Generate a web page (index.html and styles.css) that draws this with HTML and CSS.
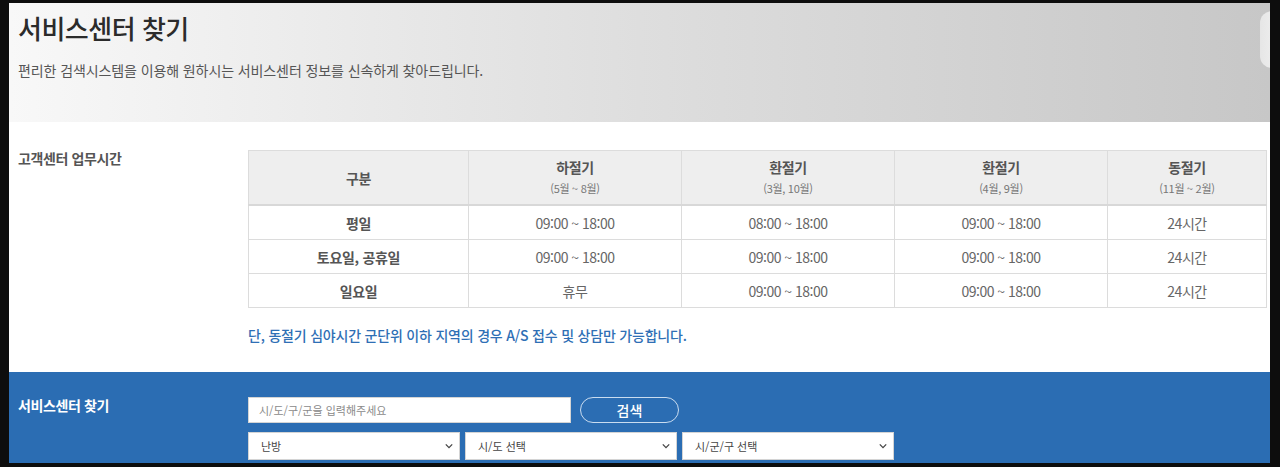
FILE: index.html
```
<!doctype html>
<html lang="ko">
  <head>
    <meta charset="utf-8">
    <link rel="stylesheet" href="styles.css">
  </head>
  <body>
    <div class="page">
      <div class="page-header">
        <h1 class="page-title">서비스센터 찾기</h1>
        <p class="page-desc">편리한 검색시스템을 이용해 원하시는 서비스센터 정보를 신속하게 찾아드립니다.</p>
        <div class="header-tab"></div>
      </div>

      <div class="section hours">
        <div class="section-label">고객센터 업무시간</div>
        <div class="section-body">
          <table class="hours-table">
            <colgroup>
              <col class="col-kind">
              <col class="col-season">
              <col class="col-season">
              <col class="col-season">
              <col class="col-winter">
            </colgroup>
            <thead>
              <tr>
                <th>구분</th>
                <th>하절기<span class="months">(5월 ~ 8월)</span></th>
                <th>환절기<span class="months">(3월, 10월)</span></th>
                <th>환절기<span class="months">(4월, 9월)</span></th>
                <th>동절기<span class="months">(11월 ~ 2월)</span></th>
              </tr>
            </thead>
            <tbody>
              <tr>
                <td class="kind">평일</td>
                <td>09:00 ~ 18:00</td>
                <td>08:00 ~ 18:00</td>
                <td>09:00 ~ 18:00</td>
                <td>24시간</td>
              </tr>
              <tr>
                <td class="kind">토요일, 공휴일</td>
                <td>09:00 ~ 18:00</td>
                <td>09:00 ~ 18:00</td>
                <td>09:00 ~ 18:00</td>
                <td>24시간</td>
              </tr>
              <tr>
                <td class="kind">일요일</td>
                <td>휴무</td>
                <td>09:00 ~ 18:00</td>
                <td>09:00 ~ 18:00</td>
                <td>24시간</td>
              </tr>
            </tbody>
          </table>
          <p class="hours-note">단, 동절기 심야시간 군단위 이하 지역의 경우 A/S 접수 및 상담만 가능합니다.</p>
        </div>
      </div>

      <div class="section search">
        <div class="section-label">서비스센터 찾기</div>
        <div class="section-body">
          <div class="search-row">
            <input class="search-input" type="text" placeholder="시/도/구/군을 입력해주세요">
            <button class="search-btn" type="button">검색</button>
          </div>
          <div class="select-row">
            <div class="select-box">
              <span>난방</span>
              <svg class="chevron" viewBox="0 0 10 6" width="8" height="6"><path d="M1 1l4 4 4-4" fill="none" stroke="#444" stroke-width="1.6"/></svg>
            </div>
            <div class="select-box">
              <span>시/도 선택</span>
              <svg class="chevron" viewBox="0 0 10 6" width="8" height="6"><path d="M1 1l4 4 4-4" fill="none" stroke="#444" stroke-width="1.6"/></svg>
            </div>
            <div class="select-box">
              <span>시/군/구 선택</span>
              <svg class="chevron" viewBox="0 0 10 6" width="8" height="6"><path d="M1 1l4 4 4-4" fill="none" stroke="#444" stroke-width="1.6"/></svg>
            </div>
          </div>
        </div>
      </div>
    </div>
  </body>
</html>
```

FILE: styles.css
```
html, body {
  margin: 0;
  padding: 0;
  height: 100%;
}

body {
  background: #0d0d0d;
  font-family: "Noto Sans CJK KR", "Noto Sans", sans-serif;
  overflow: hidden;
}

.page {
  margin: 3px 10px 0 9px;
  height: 460px;
  overflow: hidden;
}

/* header */
.page-header {
  position: relative;
  height: 119px;
  padding: 0 9px;
  background: linear-gradient(to right, #f8f8f8 0%, #dedede 50%, #c7c7c7 100%);
  overflow: hidden;
}

.page-title {
  margin: 0;
  padding-top: 7px;
  font-size: 26px;
  line-height: 36px;
  font-weight: 500;
  color: #2b2b2b;
  letter-spacing: -0.5px;
}

.page-desc {
  margin: 14px 0 0;
  font-size: 14px;
  line-height: 20px;
  color: #555;
  letter-spacing: -0.1px;
}

.header-tab {
  position: absolute;
  right: -14px;
  top: 8px;
  width: 24px;
  height: 57px;
  border-radius: 12px;
  background: linear-gradient(to right, #e6e6e6, #f4f4f4);
}

/* sections */
.section {
  display: flex;
}

.section-label {
  width: 230px;
  padding-left: 9px;
  flex: none;
  font-size: 14px;
  font-weight: 700;
  letter-spacing: -0.4px;
}

.section-body {
  width: 1019px;
}

.hours {
  height: 250px;
  background: #fff;
}

.hours .section-label {
  padding-top: 26px;
  color: #555;
}

.hours .section-body {
  padding-top: 28px;
}

/* table */
.hours-table {
  width: 1019px;
  border-collapse: collapse;
  table-layout: fixed;
  font-size: 14px;
  color: #666;
}

.col-kind { width: 220px; }
.col-season { width: 213px; }
.col-winter { width: 159px; }

.hours-table th,
.hours-table td {
  border: 1px solid #dcdcdc;
  text-align: center;
  padding: 0;
}

.hours-table th {
  height: 53px;
  background: #eeeeee;
  color: #555;
  font-weight: 700;
  line-height: 18px;
  border-bottom: 2px solid #d8d8d8;
  letter-spacing: -0.3px;
  vertical-align: middle;
}

.hours-table th .months {
  display: block;
  margin-top: 3px;
  font-size: 11px;
  font-weight: 400;
  color: #777;
  letter-spacing: -0.3px;
}

.hours-table td {
  height: 33px;
  letter-spacing: -0.5px;
}

.hours-table td.kind {
  font-weight: 700;
  color: #555;
  letter-spacing: -0.3px;
}

.hours-note {
  margin: 17px 0 0;
  font-size: 14px;
  line-height: 20px;
  font-weight: 500;
  color: #2f6fb5;
  letter-spacing: -0.2px;
}

/* search */
.search {
  height: 91px;
  background: #2b6db3;
}

.search .section-label {
  padding-top: 23px;
  color: #fff;
}

.search .section-body {
  padding-top: 25px;
}

.search-row {
  display: flex;
  gap: 9px;
}

.search-input {
  box-sizing: border-box;
  width: 323px;
  height: 26px;
  margin: 0;
  border: 1px solid #d4d4d4;
  padding: 0 10px;
  font-family: inherit;
  font-size: 11px;
  color: #333;
  outline: none;
}

.search-input::placeholder {
  color: #8a8a8a;
}

.search-btn {
  box-sizing: border-box;
  width: 99px;
  height: 26px;
  border: 1px solid #c9dcf0;
  border-radius: 13px;
  background: transparent;
  color: #fff;
  font-family: inherit;
  font-size: 14px;
  font-weight: 500;
  padding: 0;
}

.select-row {
  display: flex;
  gap: 5px;
  margin-top: 9px;
}

.select-box {
  box-sizing: border-box;
  width: 212px;
  height: 28px;
  background: #fff;
  border: 1px solid #d4d4d4;
  display: flex;
  align-items: center;
  justify-content: space-between;
  padding: 0 6px 0 12px;
  font-size: 11px;
  color: #444;
}

.chevron {
  flex: none;
}
```
